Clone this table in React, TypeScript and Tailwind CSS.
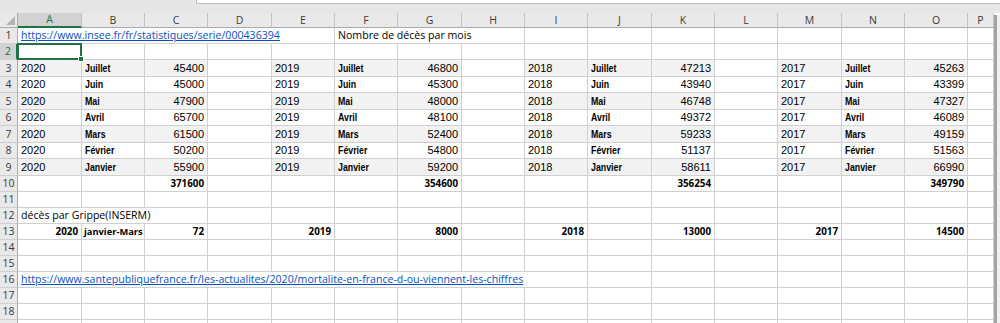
import React from "react";

const COLS =
  "grid grid-cols-[18px_64px_63px_63px_64px_63px_63px_64px_63px_63px_64px_63px_63px_64px_63px_63px_26px]";
const CELL =
  "border-r border-b border-[#d0d0d0] flex items-center whitespace-nowrap overflow-hidden px-[3px] leading-none text-black";
const SEGOE = "font-['Open_Sans','Noto_Sans',sans-serif]";
const ARIAL = "font-['Liberation_Sans',Arial,sans-serif]";
const LINK = "font-['Open_Sans','Noto_Sans',sans-serif] text-[10.6px] text-[#0b50c0] underline";
const BOLDNUM = "font-['Open_Sans','Noto_Sans',sans-serif] text-[9.8px] font-bold";
const GREY = "bg-[#f2f2f2]";

const LETTERS = ["A", "B", "C", "D", "E", "F", "G", "H", "I", "J", "K", "L", "M", "N", "O", "P"];
const MONTHS = ["Juillet", "Juin", "Mai", "Avril", "Mars", "Février", "Janvier"];
const BLOCKS = [
  { y: "2020", v: [45400, 45000, 47900, 65700, 61500, 50200, 55900] },
  { y: "2019", v: [46800, 45300, 48000, 48100, 52400, 54800, 59200] },
  { y: "2018", v: [47213, 43940, 46748, 49372, 59233, 51137, 58611] },
  { y: "2017", v: [45263, 43399, 47327, 46089, 49159, 51563, 66990] },
];

function rowH(n: number) {
  return n >= 3 && n <= 9 && n % 2 === 1 ? "h-[17px]" : "h-[16px]";
}

function Row({ n, label = true, children }: { n: number; label?: boolean; children?: React.ReactNode }) {
  const sel = n === 2;
  return (
    <div className={`${COLS} ${rowH(n)} shrink-0`}>
      <div
        className={`flex items-center justify-center border-b border-[#cfcfcf] ${SEGOE} text-[10.5px] leading-none ${
          sel
            ? "bg-[#d2d2d2] text-[#217346] border-r-2 border-r-[#217346]"
            : "bg-[#e9e9e9] text-[#3b3b3b] border-r border-r-[#ababab]"
        }`}
      >
        {label ? n : null}
      </div>
      {children}
    </div>
  );
}

function Empty({ count, grey }: { count: number; grey?: boolean }) {
  return (
    <>
      {Array.from({ length: count }).map((_, i) => (
        <div key={i} className={`${CELL} ${grey ? GREY : ""}`} />
      ))}
    </>
  );
}

export default function App() {
  return (
    <div className="w-[1000px] h-[323px] overflow-hidden bg-white flex flex-col">
      {/* top bar */}
      <div className="h-[13px] bg-[#e6e6e6] flex shrink-0">
        <div className="w-[196px]" />
        <div className="flex-1 h-[4px] bg-white border-l border-b border-[#bcbcbc]" />
      </div>
      <div className="flex flex-1 min-h-0 overflow-hidden">
        <div className="w-[994px] flex flex-col">
          {/* header row */}
          <div className={`${COLS} h-[15px] shrink-0`}>
            <div className="bg-[#e9e9e9] border-r border-b border-[#ababab] flex items-end justify-end pr-[2px] pb-[2px]">
              <svg width="9" height="9" viewBox="0 0 9 9">
                <polygon points="9,0 9,9 0,9" fill="#b4b4b4" />
              </svg>
            </div>
            {LETTERS.map((l) => (
              <div
                key={l}
                className={`flex items-center justify-center ${SEGOE} text-[10.5px] leading-none border-r border-r-[#c4c4c4] ${
                  l === "A"
                    ? "bg-[#d2d2d2] text-[#217346] border-b-2 border-b-[#217346]"
                    : "bg-[#e9e9e9] text-[#3b3b3b] border-b border-b-[#ababab]"
                }`}
              >
                {l}
              </div>
            ))}
          </div>

          {/* row 1 */}
          <Row n={1}>
            <div className={`${CELL} col-span-5`}>
              <span className={LINK}>https://www.insee.fr/fr/statistiques/serie/000436394</span>
            </div>
            <div className={`${CELL} col-span-3`}>
              <span className={`${SEGOE} text-[10.6px]`}>Nombre de décès par mois</span>
            </div>
            <Empty count={8} />
          </Row>

          {/* row 2 */}
          <Row n={2}>
            <div className="relative border-r border-b border-[#d0d0d0]">
              <div className="absolute -left-px -top-px -right-px -bottom-px border-2 border-[#217346] z-10" />
              <div className="absolute right-[-3px] bottom-[-3px] w-[6px] h-[6px] bg-[#217346] border border-white z-20" />
            </div>
            <Empty count={15} />
          </Row>

          {/* data rows 3-9 */}
          {MONTHS.map((m, i) => {
            const g = i % 2 === 0;
            const bg = g ? GREY : "";
            return (
              <Row key={m} n={i + 3}>
                {BLOCKS.map((b) => (
                  <React.Fragment key={b.y}>
                    <div className={`${CELL} ${bg} ${ARIAL} text-[11px]`}>{b.y}</div>
                    <div className={`${CELL} ${bg}`}>
                      <span className={`${ARIAL} text-[11px] font-bold inline-block origin-left scale-x-[0.8]`}>
                        {m}
                      </span>
                    </div>
                    <div className={`${CELL} ${bg} justify-end ${ARIAL} text-[11px]`}>{b.v[i]}</div>
                    <div className={CELL} />
                  </React.Fragment>
                ))}
              </Row>
            );
          })}

          {/* row 10 totals */}
          <Row n={10}>
            <Empty count={2} />
            <div className={`${CELL} justify-end ${BOLDNUM}`}>371600</div>
            <Empty count={3} />
            <div className={`${CELL} justify-end ${BOLDNUM}`}>354600</div>
            <Empty count={3} />
            <div className={`${CELL} justify-end ${BOLDNUM}`}>356254</div>
            <Empty count={3} />
            <div className={`${CELL} justify-end ${BOLDNUM}`}>349790</div>
            <Empty count={1} />
          </Row>

          <Row n={11}>
            <Empty count={16} />
          </Row>

          <Row n={12}>
            <div className={`${CELL} col-span-3`}>
              <span className={`${SEGOE} text-[10.6px]`}>décès par Grippe(INSERM)</span>
            </div>
            <Empty count={13} />
          </Row>

          <Row n={13}>
            <div className={`${CELL} justify-end ${BOLDNUM}`}>2020</div>
            <div className="border-r border-b border-[#d0d0d0] flex items-center whitespace-nowrap overflow-hidden pl-[2px] leading-none text-black font-['Open_Sans','Noto_Sans',sans-serif] text-[9.3px] font-bold">
              janvier-Mars
            </div>
            <div className={`${CELL} justify-end ${BOLDNUM}`}>72</div>
            <Empty count={1} />
            <div className={`${CELL} justify-end ${BOLDNUM}`}>2019</div>
            <Empty count={1} />
            <div className={`${CELL} justify-end ${BOLDNUM}`}>8000</div>
            <Empty count={1} />
            <div className={`${CELL} justify-end ${BOLDNUM}`}>2018</div>
            <Empty count={1} />
            <div className={`${CELL} justify-end ${BOLDNUM}`}>13000</div>
            <Empty count={1} />
            <div className={`${CELL} justify-end ${BOLDNUM}`}>2017</div>
            <Empty count={1} />
            <div className={`${CELL} justify-end ${BOLDNUM}`}>14500</div>
            <Empty count={1} />
          </Row>

          <Row n={14}>
            <Empty count={16} />
          </Row>
          <Row n={15}>
            <Empty count={16} />
          </Row>

          <Row n={16}>
            <div className={`${CELL} col-span-9`}>
              <span className={LINK}>
                https://www.santepubliquefrance.fr/les-actualites/2020/mortalite-en-france-d-ou-viennent-les-chiffres
              </span>
            </div>
            <Empty count={7} />
          </Row>

          <Row n={17}>
            <Empty count={16} />
          </Row>
          <Row n={18}>
            <Empty count={16} />
          </Row>
          <Row n={19} label={false}>
            <Empty count={16} />
          </Row>
        </div>
        {/* right edge */}
        <div className="w-[6px] flex flex-col">
          <div className="h-[2px]" />
          <div className="flex-1 border-l-[3px] border-[#a3a3a3] bg-[#f0f0f0]" />
        </div>
      </div>
    </div>
  );
}
